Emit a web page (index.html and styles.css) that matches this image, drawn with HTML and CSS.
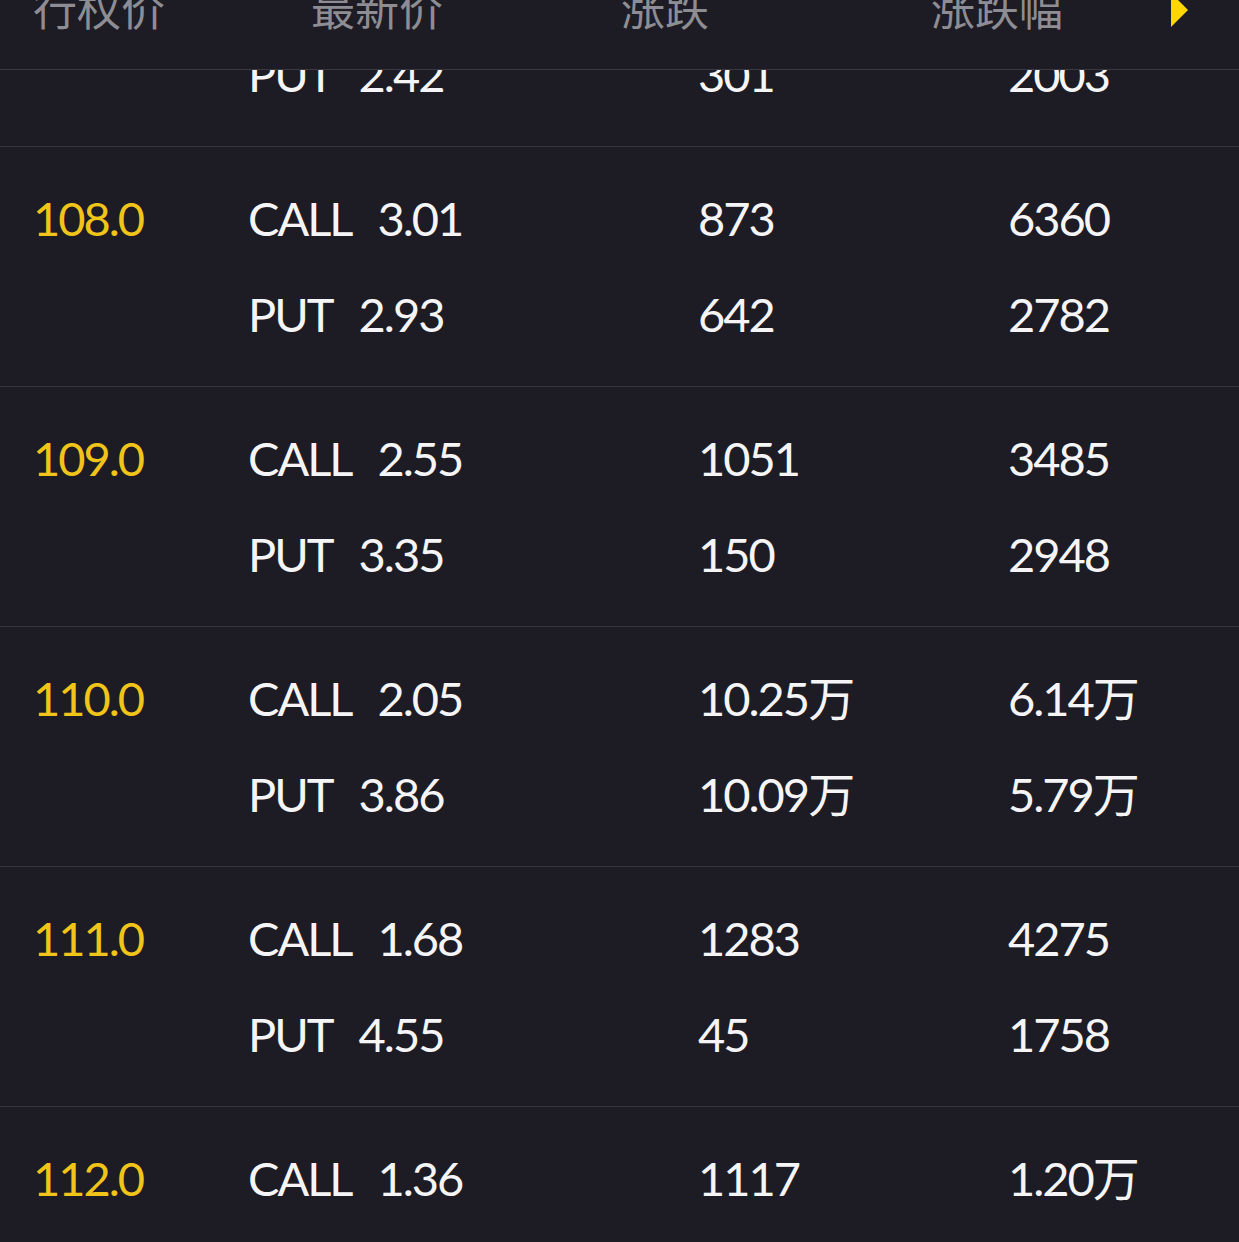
FILE: index.html
```html
<!DOCTYPE html>
<html lang="zh-CN">
<head>
<meta charset="utf-8">
<title>期权链</title>
<link rel="stylesheet" href="styles.css">
</head>
<body>
<header class="table-head">
  <div class="head-row">
    <span class="head-cell">行权价</span>
    <span class="head-cell">最新价</span>
    <span class="head-cell">涨跌</span>
    <span class="head-cell">涨跌幅</span>
  </div>
  <svg class="more-arrow" width="18" height="34" viewBox="0 0 18 34"><polygon points="0,0 17,17 0,34" fill="#ffd600"/></svg>
</header>
<main class="chain">
  <section class="group first">
    <div class="row"><span class="strike">107.0</span><span class="latest"><span class="kind">CALL</span>3.48</span><span class="val">515</span><span class="val">4012</span></div>
    <div class="row"><span class="strike"></span><span class="latest"><span class="kind">PUT</span>2.42</span><span class="val">301</span><span class="val">2003</span></div>
  </section>
  <section class="group">
    <div class="row"><span class="strike">108.0</span><span class="latest"><span class="kind">CALL</span>3.01</span><span class="val">873</span><span class="val">6360</span></div>
    <div class="row"><span class="strike"></span><span class="latest"><span class="kind">PUT</span>2.93</span><span class="val">642</span><span class="val">2782</span></div>
  </section>
  <section class="group">
    <div class="row"><span class="strike">109.0</span><span class="latest"><span class="kind">CALL</span>2.55</span><span class="val">1051</span><span class="val">3485</span></div>
    <div class="row"><span class="strike"></span><span class="latest"><span class="kind">PUT</span>3.35</span><span class="val">150</span><span class="val">2948</span></div>
  </section>
  <section class="group">
    <div class="row"><span class="strike">110.0</span><span class="latest"><span class="kind">CALL</span>2.05</span><span class="val">10.25万</span><span class="val">6.14万</span></div>
    <div class="row"><span class="strike"></span><span class="latest"><span class="kind">PUT</span>3.86</span><span class="val">10.09万</span><span class="val">5.79万</span></div>
  </section>
  <section class="group">
    <div class="row"><span class="strike">111.0</span><span class="latest"><span class="kind">CALL</span>1.68</span><span class="val">1283</span><span class="val">4275</span></div>
    <div class="row"><span class="strike"></span><span class="latest"><span class="kind">PUT</span>4.55</span><span class="val">45</span><span class="val">1758</span></div>
  </section>
  <section class="group">
    <div class="row"><span class="strike">112.0</span><span class="latest"><span class="kind">CALL</span>1.36</span><span class="val">1117</span><span class="val">1.20万</span></div>
    <div class="row"><span class="strike"></span><span class="latest"><span class="kind">PUT</span>5.12</span><span class="val">38</span><span class="val">1322</span></div>
  </section>
</main>
</body>
</html>
```

FILE: styles.css
```css
html, body {
  margin: 0;
  padding: 0;
  background: #1d1c24;
  overflow: hidden;
}

body {
  font-family: "Lato", "Noto Sans CJK SC", sans-serif;
  color: #f5f5f7;
}

.table-head {
  position: fixed;
  top: 0;
  left: 0;
  right: 0;
  height: 69px;
  background: #1d1c24;
  border-bottom: 1px solid #3a3942;
  overflow: hidden;
  z-index: 2;
}

.head-row {
  display: grid;
  grid-template-columns: 278px 310px 310px 1fr;
  padding-left: 33px;
  margin-top: -15px;
  font-family: "Noto Sans CJK SC", sans-serif;
  font-size: 44px;
  line-height: 44px;
  color: #8e8d94;
}

.more-arrow {
  position: absolute;
  left: 1171px;
  top: -7px;
}

.chain {
  display: flex;
  flex-direction: column;
}

.group {
  padding: 23px 0 24px;
  border-bottom: 1px solid #35343c;
}

.group.first {
  margin-top: -93px;
}

.row {
  display: grid;
  grid-template-columns: 215px 450px 310px 1fr;
  padding-left: 33px;
  height: 96px;
  align-items: center;
  font-size: 47px;
  font-weight: 400;
  letter-spacing: -2px;
  line-height: 96px;
}

.strike {
  color: #f0c419;
}

.kind {
  margin-right: 26px;
}
```
